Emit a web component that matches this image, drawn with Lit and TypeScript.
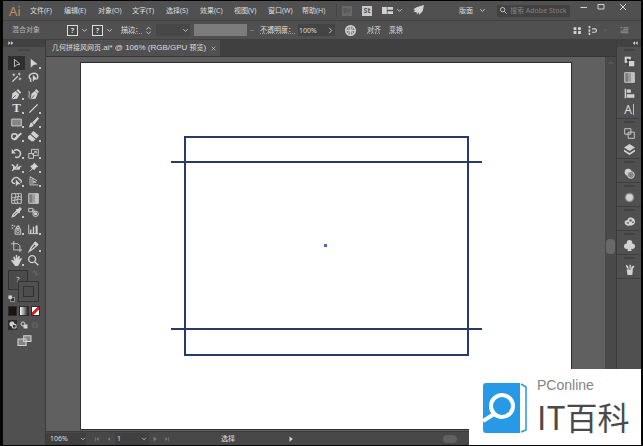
import { LitElement, html, svg, css, nothing, type SVGTemplateResult } from "lit";
import { customElement, property } from "lit/decorators.js";
import { classMap } from "lit/directives/class-map.js";

/* Glyph shapes, each on a 16 x 16 grid. */
const ICONS: Record<string, SVGTemplateResult> = {
  select: svg`<path class="s" d="M5 2v11l3-3 5-1z"/>`,
  direct: svg`<path class="f" d="M4 1v13l4-4 6-1z"/>`,
  wand: svg`<path class="s w" d="M2 14l8-8"/><path class="s" d="M4 2v4M2 4h4M12 1v4M10 3h4M13 8v4M11 10h4"/>`,
  lasso: svg`<path class="s w" d="M5 11C0 9 1 3 7 2s9 3 6 8M5 11c-2 0-2 3 0 3"/><path class="f" d="M7 4v10l3-3h4z"/>`,
  pen: svg`<path class="f" d="M1 15l1-9 5-3 5 5-3 6zM8 2l2-2 5 5-2 2z"/><path class="d" d="M2 14l5-5"/>`,
  curve: svg`<path class="f" d="M4 15l1-8 5-4 4 4-3 7zM10 2l2-2 4 4-2 2z"/><path class="d" d="M5 14l4-5"/><path class="s" d="M3 14C-1 11 4 7 1 3"/>`,
  line: svg`<path class="s w" d="M2 14L14 2"/>`,
  rect: svg`<path class="m" d="M1 3h14v10H1z"/><path class="s" d="M1 3h14v10H1z"/>`,
  brush: svg`<path class="f" d="M14 0l2 2-7 9-3-3zM5 8l3 3c-1 4-4 4-7 4 2-2 1-6 4-7z"/>`,
  shaper: svg`<circle class="s w" cx="5" cy="8" r="4"/><path class="f" d="M14 2l2 2-8 8-4 2 1-4z"/>`,
  eraser: svg`<path class="f" d="M8 0l8 7-4 4-8-7z"/><path class="f" d="M3 5l8 7-3 3H5L0 11V8z"/>`,
  rotate: svg`<path class="s w" d="M4 4c6-4 12 2 9 7-2 3-5 3-7 2"/><path class="f" d="M1 1v7h6z"/>`,
  scale: svg`<path class="s" d="M1 8h7v7H1zM5 8V2h10v9H8M6 10l6-5M9 5h3v3"/>`,
  width: svg`<path class="s w" d="M1 4c4 1 4 4 6 6s4-3 8-4M2 13c2-5 5-1 8-10"/><path class="f" d="M3 7h4v4H3zM9 7h4v4H9z"/>`,
  pin: svg`<path class="f" d="M9 1l6 6-3 1-3 4-2-2-6 5 5-6-3-3 4-2z"/>`,
  builder: svg`<path class="s w" d="M6 11C1 11 0 6 3 5c1-4 8-4 9 0 3 0 4 3 2 5"/><path class="f" d="M7 5v10l3-3h4z"/>`,
  persp: svg`<path class="s" d="M3 1v12M7 3v9M3 1l10 6M3 5l8 4M3 9h9M3 13h12"/><path class="m" d="M3 2l4 3v7H3z"/>`,
  mesh: svg`<path class="s" d="M1 1h14v14H1zM1 6c4 3 8-3 14 0M1 10c4 3 8-3 14 0M6 1c3 4-3 8 0 14M10 1c3 4-3 8 0 14"/>`,
  gradient: svg`<path class="f g1" d="M1 1h5v14H1z"/><path class="f g2" d="M6 1h4v14H6z"/><path class="f g3" d="M10 1h5v14h-5z"/><path class="s" d="M1 1h14v14H1z"/>`,
  dropper: svg`<path class="s w" d="M2 14l1-3 6-6 2 2-6 6z"/><path class="f" d="M8 3l2 0 3-3 3 3-3 3v2l-1 1-5-5z"/>`,
  blend: svg`<path class="m" d="M5 5l4-3 4 8-4 1z"/><circle class="s" cx="11" cy="10" r="4"/><path class="s" d="M1 2h6v5H1z"/><path class="f" d="M9 8h4v4H9z"/>`,
  spray: svg`<path class="s" d="M6 7h8v8H6zM8 4h4v3H8z"/><path class="f" d="M1 1h2v2H1zM4 2h2v2H4zM1 5h2v2H1zM9 2h3v2H9z"/><circle class="s" cx="10" cy="11" r="2"/>`,
  chart: svg`<path class="s" d="M1 1v13h14"/><path class="f" d="M3 8h2v6H3zM7 4h2v10H7zM11 2h3v12h-3z"/>`,
  artboard: svg`<path class="s" d="M4 0v13h12M0 4h10l3 3v9"/>`,
  slice: svg`<path class="s w" d="M2 15l3-6 6-7 3 3-6 6z"/><path class="f" d="M10 1l5 4-2 3-5-4z"/>`,
  hand: svg`<path class="f" d="M0 8l2-1 3 2L3 3l2-1 2 4V0h2v5l2-4 2 1-1 5 3-3 1 1-4 8-2 3H6z"/>`,
  zoom: svg`<circle class="s w" cx="6" cy="6" r="5"/><path class="s w" d="M10 10l5 5"/>`,
  screens: svg`<path class="m" d="M7 1h9v7H7zM0 5h10v8H0z"/><path class="s" d="M7 1h9v7H7zM0 5h10v8H0z"/>`,
  swap: svg`<path class="s" d="M3 4h7v7M6 1L3 4l3 3M7 9l3 3 3-3"/>`,
  defaults: svg`<path class="k" d="M6 6h9v9H6z"/><path class="s" d="M6 6h9v9H6z"/><path class="f" d="M1 1h8v8H1z"/>`,
  modeA: svg`<circle class="f" cx="6" cy="6" r="5"/><path class="k" d="M6 6h9v9H6z"/><path class="s w" d="M7 7h7v7H7z"/>`,
  modeB: svg`<circle class="s w" cx="6" cy="6" r="4"/><path class="f" d="M7 7h8v8H7z"/>`,
  modeC: svg`<circle class="s" cx="8" cy="8" r="6"/><path class="s" d="M5 5h6v6H5z"/>`,
  transform: svg`<path class="f" d="M1 1h9v9H1z"/><path class="k" d="M5 5h10v10H5z"/><path class="f" d="M7 7h8v8H7z"/><path class="k" d="M4 4h3v3H4z"/>`,
  align: svg`<path class="f" d="M1 1h2v14H1zM4 2h6v5H4zM4 9h11v5H4z"/>`,
  artboards: svg`<path class="s" d="M1 1h9v8H1zM6 6h9v9H6z"/>`,
  layers: svg`<path class="f" d="M8 0l8 5-8 5-8-5z"/><path class="f" d="M0 8l8 5 8-5v3l-8 5-8-5z"/>`,
  transparency: svg`<circle class="f" cx="6" cy="6" r="5"/><circle class="m" cx="10" cy="10" r="5"/><circle class="s" cx="10" cy="10" r="5"/>`,
  appearance: svg`<circle class="m" cx="8" cy="8" r="7"/><circle class="f" cx="8" cy="8" r="5"/>`,
  palette: svg`<path class="f" fill-rule="evenodd" d="M1 9c0-3 4-2 5-5s10-2 10 4-6 6-9 6-6-1-6-5zM8 5v3h3V5zM12 8v2h2V8zM4 9v2h3V9z"/>`,
  club: svg`<circle class="f" cx="8" cy="4" r="4"/><circle class="f" cx="4" cy="9" r="4"/><circle class="f" cx="12" cy="9" r="4"/><path class="f" d="M7 5h2l2 11H5z"/>`,
  brushes: svg`<path class="f" d="M4 8h9l-1 8H5zM6 8L3 4l0-3 3 2 1 5zM8 7V1h2v6zM10 8l1-4 3-2 1 2-3 4z"/>`,
  chevron: svg`<path class="s w" d="M3 5l5 5 5-5"/>`,
  next: svg`<path class="s w" d="M5 2l6 6-6 6"/>`,
  stepper: svg`<path class="s w" d="M3 5l5-4 5 4M3 11l5 4 5-4"/>`,
  layout: svg`<path class="f" d="M0 3h7v10H0zM8 3h8v4H8zM8 9h8v4H8z"/>`,
  rocket: svg`<path class="f" d="M16 0l-2 9-5 5-1-4-2 4-1-4-4 0 2-3-3-1 6-3z"/>`,
  globe: svg`<circle class="m" cx="8" cy="8" r="7"/><circle class="s w" cx="8" cy="8" r="7"/><path class="s" d="M8 1v14M1 8h14M4 3c3 4 3 6 0 10M12 3c-3 4-3 6 0 10"/>`,
  tiles: svg`<path class="f" d="M1 2h5v5H1zM9 2h5v5H9zM1 9h5v5H1zM9 9h5v5H9z"/>`,
  snap: svg`<path class="f" d="M1 0h3v4H1zM1 6h3v4H1zM1 12h3v4H1z"/><path class="s w" d="M7 5h5c4 0 4 6 0 6H7"/>`,
  list: svg`<path class="s" d="M1 3h3M6 3h9M6 6h9M1 9h14M1 12h14"/>`,
  min: svg`<path class="s w" d="M1 9h13"/>`,
  max: svg`<path class="s w" d="M2 3h12v9H2z"/>`,
  close: svg`<path class="s w" d="M2 2l12 12M14 2L2 14"/>`,
  left2: svg`<path class="f" d="M8 3v10L2 8zM15 3v10L9 8z"/>`,
  right2: svg`<path class="f" d="M1 3v10l6-5zM8 3v10l6-5z"/>`,
  play: svg`<path class="f" d="M4 1v14l9-7z"/>`,
  first: svg`<path class="f" d="M3 3h2v10H3zM13 3v10L6 8z"/>`,
  prev: svg`<path class="f" d="M11 3v10L4 8z"/>`,
  last: svg`<path class="f" d="M11 3h2v10h-2zM3 3v10l7-5z"/>`,
  up: svg`<path class="s" d="M2 11l6-6 6 6"/>`,
};

@customElement("ai-icon")
class AiIcon extends LitElement {
  @property() name = "";
  static styles = css`
    :host { display: block; flex: none; width: 11px; height: 11px; color: #d2d2d2; }
    svg { display: block; width: 100%; height: 100%; overflow: visible; }
    .s { fill: none; stroke: currentColor; stroke-width: 1.3; }
    .w { stroke-width: 2; }
    .f { fill: currentColor; }
    .m { fill: #858585; }
    .k { fill: #303030; }
    .d { fill: none; stroke: #505050; stroke-width: 1.2; }
    .g1 { opacity: 0.35; }
    .g2 { opacity: 0.6; }
    .g3 { opacity: 0.85; }
  `;
  render() {
    return html`<svg viewBox="0 0 16 16" aria-hidden="true">${ICONS[this.name] ?? nothing}</svg>`;
  }
}

const base = css`
  :host, * { box-sizing: border-box; }
  button, input, select {
    appearance: none; border: 0; margin: 0; padding: 0; min-width: 0;
    background: none; color: inherit; font: inherit; border-radius: 0;
  }
  button { display: flex; align-items: center; justify-content: center; white-space: nowrap; }
`;

const MENUS = ["文件(F)", "编辑(E)", "对象(O)", "文字(T)", "选择(S)", "效果(C)", "视图(V)", "窗口(W)", "帮助(H)"];

@customElement("menu-bar")
class MenuBar extends LitElement {
  static styles = [base, css`
    :host { display: flex; align-items: center; height: 20px; background: #505050; border-bottom: 1px solid #414141; }
    .brand { width: 27px; padding-left: 6px; font-size: 13px; color: #c58e62; }
    nav { display: flex; }
    .menu { width: 34px; justify-content: flex-start; }
    .bar { width: 1px; height: 13px; background: #454545; }
    .tools { display: flex; align-items: center; gap: 10px; margin-left: 5px; }
    .badge { width: 10px; height: 10px; font-weight: 700; background: #c9c9c9; color: #505050; }
    .dim { background: #686868; color: #555; }
    .arrange { gap: 3px; }
    .small { width: 7px; height: 7px; }
    .space { margin-left: auto; gap: 6px; }
    .search { display: flex; align-items: center; gap: 3px; width: 73px; height: 12px; margin-left: 11px; padding-left: 3px; background: #424242; }
    .search input { flex: 1; }
    .search input::placeholder { color: #818181; opacity: 1; }
    .win { display: flex; align-self: flex-start; gap: 9px; margin: 2px 14px 0 10px; }
    .win ai-icon { width: 8px; height: 8px; }
    .win button:last-child { margin-left: 5px; }
  `];
  render() {
    return html`
      <span class="brand">Ai</span>
      <nav>${MENUS.map((m) => html`<button class="menu">${m}</button>`)}</nav>
      <span class="bar"></span>
      <div class="tools">
        <button class="badge dim">Br</button>
        <button class="badge">St</button>
        <button class="arrange" aria-label="Arrange"><ai-icon name="layout"></ai-icon><ai-icon class="small" name="chevron"></ai-icon></button>
        <button aria-label="GPU"><ai-icon name="rocket"></ai-icon></button>
      </div>
      <button class="space">版面<ai-icon class="small" name="chevron"></ai-icon></button>
      <label class="search"><ai-icon class="small" name="zoom"></ai-icon><input aria-label="搜索" placeholder="搜索 Adobe Stock" /></label>
      <div class="win">
        <button aria-label="Minimize"><ai-icon name="min"></ai-icon></button>
        <button aria-label="Maximize"><ai-icon name="max"></ai-icon></button>
        <button aria-label="Close"><ai-icon name="close"></ai-icon></button>
      </div>`;
  }
}

@customElement("control-bar")
class ControlBar extends LitElement {
  static styles = [base, css`
    :host { display: flex; align-items: center; height: 19px; padding-left: 9px; background: #505050; border-bottom: 1px solid #3f3f3f; }
    .kind { width: 55px; color: #b5b5b5; }
    .swatch { gap: 3px; width: 25px; justify-content: flex-start; }
    .q { width: 11px; height: 11px; border: 1px solid #dcdcdc; line-height: 9px; text-align: center; font-weight: 700; background: #484848; }
    .small { width: 7px; height: 7px; }
    .stroke { width: 24px; margin-left: 4px; text-decoration: underline dotted #999; }
    .weight { display: flex; align-items: center; justify-content: flex-end; width: 34px; height: 12px; margin: 0 4px; padding-right: 1px; background: #474747; }
    .profile { width: 53px; height: 12px; background: #7c7c7c; }
    .dash { width: 4px; height: 1px; margin: 0 6px 0 3px; background: #777; }
    .field { display: flex; align-items: center; gap: 3px; }
    .field span { text-decoration: underline dotted #999; }
    .field input { width: 27px; height: 12px; padding-left: 1px; background: #444; }
    .more { width: 10px; height: 12px; background: #444; }
    .globe { margin: 0 11px 0 10px; }
    .link { margin-right: 8px; text-decoration: underline dotted #999; }
    .end { display: flex; align-items: center; gap: 6px; margin: 0 12px 0 auto; }
    .end ai-icon { width: 9px; height: 9px; }
    .end .faint { width: 5px; height: 5px; color: #777; }
    .end .list { margin-left: 6px; color: #aaa; }
  `];
  render() {
    const swatch = html`<button class="swatch"><span class="q">?</span><ai-icon class="small" name="chevron"></ai-icon></button>`;
    return html`
      <span class="kind">混合对象</span>${swatch}${swatch}
      <span class="stroke">描边：</span>
      <button aria-label="Step"><ai-icon class="small" name="stepper"></ai-icon></button>
      <button class="weight" aria-label="描边"><ai-icon class="small" name="chevron"></ai-icon></button>
      <button class="profile" aria-label="Profile"></button>
      <span class="dash"></span>
      <label class="field"><span>不透明度：</span><input value="100%" /></label>
      <button class="more" aria-label="More"><ai-icon class="small" name="next"></ai-icon></button>
      <button class="globe" aria-label="Recolor"><ai-icon name="globe"></ai-icon></button>
      <button class="link">对齐</button><button class="link">变换</button>
      <div class="end">
        <button aria-label="Tiles"><ai-icon name="tiles"></ai-icon></button>
        <button aria-label="Snap"><ai-icon name="snap"></ai-icon></button>
        <ai-icon class="faint" name="chevron"></ai-icon>
        <button aria-label="Menu"><ai-icon class="list" name="list"></ai-icon></button>
      </div>`;
  }
}

/* A trailing "+" marks a tool that hides others under it. */
const TOOLS = [
  ["select", "direct+", "wand", "lasso"],
  ["pen+", "curve", "type+", "line+", "rect+", "brush+", "shaper+", "eraser+"],
  ["rotate+", "scale+", "width+", "pin+", "builder+", "persp+"],
  ["mesh", "gradient", "dropper+", "blend"],
  ["spray+", "chart+"],
  ["artboard", "slice+", "hand+", "zoom"],
];

@customElement("tool-panel")
class ToolPanel extends LitElement {
  static styles = [base, css`
    :host { display: flex; flex-direction: column; background: #505050; border-right: 1px solid #3b3b3b; }
    .head { height: 7px; padding-left: 5px; background: #414141; }
    .head ai-icon { width: 6px; height: 6px; }
    .grip { flex: none; width: 12px; height: 2px; margin: 2px auto 5px; background: #454545; }
    .groups { display: flex; flex-direction: column; gap: 3px; padding: 0 5px; }
    .group { display: grid; grid-template-columns: repeat(2, 17px); grid-auto-rows: 14px; }
    .tool { position: relative; }
    .on { background: #2f2f2f; }
    .more::after { content: ""; position: absolute; right: 1px; bottom: 1px; width: 2px; height: 2px; background: #c4c4c4; }
    .type { font: 700 13px/14px "Liberation Serif", serif; color: #dcdcdc; }
    .paint { display: grid; grid-template-columns: 10px 10px 11px; grid-template-rows: 11px 9px 12px; padding: 0 5px; margin-top: 3px; }
    .fill { grid-area: 1 / 1 / 3 / 3; border: 1px solid #323232; background: #4b4b4b; line-height: 18px; text-align: center; }
    .stroke { grid-area: 2 / 2 / 4 / 4; display: grid; place-items: center; background: #505050; border: 1px solid #323232; z-index: 1; }
    .hole { width: 11px; height: 11px; border: 1px solid #323232; background: #4d4d4d; }
    .swap { grid-area: 1 / 3; justify-self: end; width: 7px; height: 7px; color: #777; }
    .reset { grid-area: 3 / 1; align-self: end; width: 7px; height: 7px; }
    .row { display: flex; gap: 2px; padding: 0 5px; margin-top: 4px; }
    .chip { width: 10px; height: 10px; border: 1px solid #2c2c2c; background: #1d1411; }
    .fade { background: linear-gradient(90deg, #fff, #222); }
    .none { background: linear-gradient(135deg, #fff 38%, #d22 38%, #d22 62%, #fff 62%); }
    .mode { width: 10px; height: 10px; }
    .mode ai-icon { width: 8px; height: 8px; }
    .off ai-icon { color: #666; }
    .screen { margin: 5px auto 0; }
    .screen ai-icon { width: 13px; height: 13px; }
  `];
  render() {
    return html`
      <div class="head"><ai-icon name="right2"></ai-icon></div>
      <span class="grip"></span>
      <div class="groups">${TOOLS.map((g) => html`<div class="group">${g.map((t) => {
        const name = t.replace("+", "");
        return html`<button aria-label=${name} class=${classMap({ tool: true, on: name === "select", more: t !== name })}>
          ${name === "type" ? html`<span class="type">T</span>` : html`<ai-icon name=${name}></ai-icon>`}</button>`;
      })}</div>`)}</div>
      <div class="paint">
        <span class="fill">?</span>
        <span class="stroke"><span class="hole"></span></span>
        <ai-icon class="swap" name="swap"></ai-icon>
        <ai-icon class="reset" name="defaults"></ai-icon>
      </div>
      <div class="row">
        <button class="chip" aria-label="Color"></button>
        <button class="chip fade" aria-label="Gradient"></button>
        <button class="chip none" aria-label="None"></button>
      </div>
      <div class="row">
        <button class="mode on" aria-label="Normal"><ai-icon name="modeA"></ai-icon></button>
        <button class="mode" aria-label="Behind"><ai-icon name="modeB"></ai-icon></button>
        <button class="mode off" aria-label="Inside"><ai-icon name="modeC"></ai-icon></button>
      </div>
      <button class="screen" aria-label="Screen mode"><ai-icon name="screens"></ai-icon></button>`;
  }
}

const PANELS = [
  ["transform", "gradient", "align", "character"],
  ["artboards", "layers"],
  ["transparency"], ["appearance"], ["palette"], ["club"], ["brushes"],
];

@customElement("panel-dock")
class PanelDock extends LitElement {
  static styles = [base, css`
    :host { display: flex; flex-direction: column; background: #505050; border-left: 1px solid #3b3b3b; }
    .head { display: flex; justify-content: flex-end; height: 7px; padding-right: 3px; background: #414141; }
    .head ai-icon { width: 6px; height: 6px; }
    .group { display: flex; flex-direction: column; align-items: center; padding-bottom: 1px; border-bottom: 1px solid #3f3f3f; }
    .grip { width: 11px; height: 2px; margin: 2px 0; background: #424242; }
    .panel { width: 16px; height: 16px; }
    .panel ai-icon { width: 11px; height: 11px; }
    .char { padding-right: 1px; border-right: 1px solid #bbb; font-size: 12px; line-height: 11px; color: #dcdcdc; }
  `];
  render() {
    return html`
      <div class="head"><ai-icon name="left2"></ai-icon></div>
      ${PANELS.map((g) => html`<div class="group"><span class="grip"></span>${g.map((p) => html`
        <button class="panel" aria-label=${p}>${p === "character"
          ? html`<span class="char">A</span>` : html`<ai-icon name=${p}></ai-icon>`}</button>`)}</div>`)}`;
  }
}

@customElement("document-view")
class DocumentView extends LitElement {
  static styles = [base, css`
    :host { display: grid; grid-template: 17px minmax(0, 1fr) 14px / minmax(0, 1fr) 11px; }
    .tabs { grid-column: 1 / -1; display: flex; background: #404040; border-bottom: 1px solid #363636; }
    .tab { display: flex; align-items: center; gap: 5px; padding: 0 4px 0 6px; background: #505050; white-space: nowrap; }
    .latin { font: 8px/10px "Liberation Sans", sans-serif; }
    .tab ai-icon { width: 5px; height: 5px; }
    .canvas { display: flex; padding: 5px 33px 1px 34px; background: #606060; }
    .board { flex: 1; min-width: 0; background: #fff; border: 1px solid #2f2f2f; }
    .board svg { display: block; width: 100%; height: 100%; }
    .ink { fill: none; stroke: #283a68; stroke-width: 2; }
    .dot { fill: #4568b5; }
    .scroll { display: flex; flex-direction: column; align-items: center; padding-top: 3px; background: #494949; }
    .scroll ai-icon { width: 6px; height: 6px; color: #858585; }
    .spring { flex: 172; }
    .thumb { width: 9px; height: 15px; border-radius: 4px; background: #686868; }
    .rest { flex: 177; }
    .status { grid-column: 1 / -1; display: flex; align-items: center; background: #484848; border-top: 1px solid #3b3b3b; }
    .zoom, .page { display: flex; align-items: center; justify-content: space-between; height: 12px; background: #404040; }
    .zoom { width: 40px; margin-right: 5px; padding: 0 0 0 4px; }
    .page { width: 34px; padding: 0 2px; }
    .status ai-icon { width: 6px; height: 6px; }
    .status .nav { color: #777; }
    .nav { margin: 0 3px; }
    .what { margin-left: 48px; }
    .play { margin-left: 53px; }
    .track { width: 14px; height: 8px; margin-left: 149px; border-radius: 4px; background: #606060; }
  `];
  render() {
    return html`
      <div class="tabs"><div class="tab">
        <span>几何拼接风网页<span class="latin">.ai* @ 106% (RGB/GPU </span>预览<span class="latin">)</span></span>
        <button aria-label="Close tab"><ai-icon name="close"></ai-icon></button>
      </div></div>
      <div class="canvas"><div class="board">
        <svg viewBox="0 0 490 366" role="img" aria-label="Artwork">
          <path class="ink" d="M104 74h283v218H104zM90 99h311M90 266h311"/>
          <path class="dot" d="M243 181h3v3h-3z"/>
        </svg>
      </div></div>
      <div class="scroll"><ai-icon name="up"></ai-icon><span class="spring"></span><span class="thumb"></span><span class="rest"></span></div>
      <div class="status">
        <button class="zoom">106%<ai-icon name="chevron"></ai-icon></button>
        <ai-icon class="nav" name="first"></ai-icon><ai-icon class="nav" name="prev"></ai-icon>
        <button class="page">1<ai-icon name="chevron"></ai-icon></button>
        <ai-icon class="nav" name="play"></ai-icon><ai-icon class="nav" name="last"></ai-icon>
        <span class="what">选择</span>
        <ai-icon class="play" name="play"></ai-icon>
        <span class="track"></span>
      </div>`;
  }
}

@customElement("site-mark")
class SiteMark extends LitElement {
  static styles = css`
    :host { display: flex; align-items: center; gap: 9px; width: 172px; padding: 2px 0 0 14px; background: #fff; box-sizing: border-box; }
    svg { flex: none; width: 45px; height: 52px; }
    .cover { fill: #2799e6; }
    .edge { fill: none; stroke: #2799e6; stroke-width: 1.5; }
    .lens { fill: none; stroke: #fff; stroke-width: 4; }
    .words { display: flex; flex-direction: column; }
    .site { font: 14px/16px "Liberation Sans", sans-serif; color: #858585; }
    .title { font: 400 32px/47px "Noto Sans CJK SC", sans-serif; color: #4a4a4a; white-space: nowrap; }
  `;
  render() {
    return html`
      <svg viewBox="0 0 45 52" aria-hidden="true">
        <path class="cover" d="M3 1h34v50H3a3 3 0 0 1-3-3V4a3 3 0 0 1 3-3z"/>
        <path class="edge" d="M38 2l5 3v43l-5 2"/>
        <circle class="lens" cx="19" cy="24" r="11"/>
        <path class="lens" d="M11 32L0 39"/>
      </svg>
      <div class="words"><span class="site">PConline</span><span class="title">IT百科</span></div>`;
  }
}

@customElement("app-root")
class AppRoot extends LitElement {
  static styles = css`
    :host {
      position: relative; display: flex; flex-direction: column; box-sizing: border-box; height: 100vh;
      padding: 1px 2px 1px 3px; background: #050505; color: #dedede;
      font: 7px/10px "Noto Sans", "Noto Sans CJK SC", sans-serif;
    }
    .work { flex: 1; min-height: 0; display: grid; grid-template-columns: 43px minmax(0, 1fr) 25px; }
    menu-bar, control-bar { flex: none; }
    site-mark { position: absolute; right: 2px; bottom: 1px; height: 76px; }
  `;
  render() {
    return html`
      <menu-bar></menu-bar>
      <control-bar></control-bar>
      <div class="work"><tool-panel></tool-panel><document-view></document-view><panel-dock></panel-dock></div>
      <site-mark></site-mark>`;
  }
}
